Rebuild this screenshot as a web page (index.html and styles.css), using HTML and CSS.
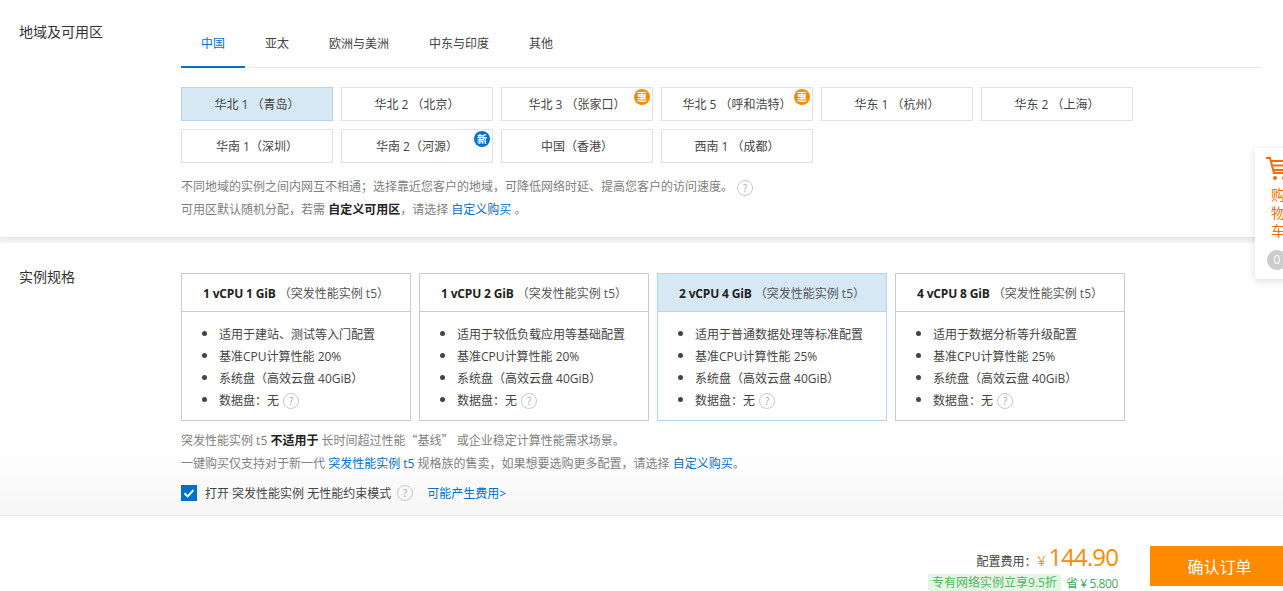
FILE: index.html
```html
<!DOCTYPE html>
<html lang="zh-CN">
<head>
<meta charset="utf-8">
<title>确认订单</title>
<link rel="stylesheet" href="styles.css">
</head>
<body>
<div class="page">
  <section class="region-section">
    <h3 class="label">地域及可用区</h3>
    <div class="content">
      <ul class="tabs">
        <li class="tab active">中国</li>
        <li class="tab">亚太</li>
        <li class="tab">欧洲与美洲</li>
        <li class="tab">中东与印度</li>
        <li class="tab">其他</li>
      </ul>
      <div class="regions">
        <div class="region selected">华北 1 （青岛）</div>
        <div class="region">华北 2 （北京）</div>
        <div class="region">华北 3 （张家口）<span class="badge orange">惠</span></div>
        <div class="region">华北 5 （呼和浩特）<span class="badge orange">惠</span></div>
        <div class="region">华东 1 （杭州）</div>
        <div class="region">华东 2 （上海）</div>
        <div class="region">华南 1（深圳）</div>
        <div class="region">华南 2（河源）<span class="badge blue">新</span></div>
        <div class="region">中国（香港）</div>
        <div class="region">西南 1 （成都）</div>
      </div>
      <p class="note first">不同地域的实例之间内网互不相通；选择靠近您客户的地域，可降低网络时延、提高您客户的访问速度。 <span class="help">?</span></p>
      <p class="note">可用区默认随机分配，若需 <b>自定义可用区</b>，请选择 <a>自定义购买</a> 。</p>
    </div>
  </section>

  <section class="spec-section">
    <h3 class="label">实例规格</h3>
    <div class="content">
      <div class="cards">
        <article class="card">
          <header class="card-head"><b>1 vCPU 1 GiB</b><span>（突发性能实例 t5）</span></header>
          <ul class="card-list">
            <li>适用于建站、测试等入门配置</li>
            <li>基准CPU计算性能 20%</li>
            <li>系统盘（高效云盘 40GiB）</li>
            <li>数据盘：无 <span class="help">?</span></li>
          </ul>
        </article>
        <article class="card">
          <header class="card-head"><b>1 vCPU 2 GiB</b><span>（突发性能实例 t5）</span></header>
          <ul class="card-list">
            <li>适用于较低负载应用等基础配置</li>
            <li>基准CPU计算性能 20%</li>
            <li>系统盘（高效云盘 40GiB）</li>
            <li>数据盘：无 <span class="help">?</span></li>
          </ul>
        </article>
        <article class="card selected">
          <header class="card-head"><b>2 vCPU 4 GiB</b><span>（突发性能实例 t5）</span></header>
          <ul class="card-list">
            <li>适用于普通数据处理等标准配置</li>
            <li>基准CPU计算性能 25%</li>
            <li>系统盘（高效云盘 40GiB）</li>
            <li>数据盘：无 <span class="help">?</span></li>
          </ul>
        </article>
        <article class="card">
          <header class="card-head"><b>4 vCPU 8 GiB</b><span>（突发性能实例 t5）</span></header>
          <ul class="card-list">
            <li>适用于数据分析等升级配置</li>
            <li>基准CPU计算性能 25%</li>
            <li>系统盘（高效云盘 40GiB）</li>
            <li>数据盘：无 <span class="help">?</span></li>
          </ul>
        </article>
      </div>
      <p class="note spec-first">突发性能实例 t5 <b>不适用于</b> 长时间超过性能<span class="cjk">“基线”</span> 或企业稳定计算性能需求场景。</p>
      <p class="note">一键购买仅支持对于新一代 <a>突发性能实例 t5</a> 规格族的售卖，如果想要选购更多配置，请选择 <a>自定义购买</a>。</p>
      <div class="unlimited">
        <span class="checkbox"><svg viewBox="0 0 16 16" width="16" height="16"><path d="M3.500 8.200 6.700 11.400 12.500 5" fill="none" stroke="#fff" stroke-width="2"/></svg></span>
        <span class="unlimited-text">打开 突发性能实例 无性能约束模式</span>
        <span class="help">?</span>
        <a class="fee">可能产生费用&gt;</a>
      </div>
    </div>
  </section>

  <footer class="footer">
    <div class="price-box">
      <div class="price-row"><span class="price-label">配置费用：</span><span class="yen">¥</span><span class="price">144.90</span></div>
      <div class="save-row"><span class="promo">专有网络实例立享9.5折</span><span class="save">省 ¥ 5.800</span></div>
    </div>
    <button class="confirm">确认订单</button>
  </footer>

  <aside class="cart">
    <svg class="cart-icon" viewBox="0 0 24 26" width="24" height="26"><path d="M1 2h4l4 15h12M6 5h16l-1.500 9H8.500M7.500 9.500h14" fill="none" stroke="#ff6a00" stroke-width="2"/><circle cx="10" cy="22" r="2" fill="#ff6a00"/><circle cx="19" cy="22" r="2" fill="#ff6a00"/></svg>
    <div class="cart-text">购物车</div>
    <div class="cart-count">0</div>
  </aside>
</div>
</body>
</html>
```
FILE: styles.css
```css
* { box-sizing: border-box; }
html, body { margin: 0; padding: 0; height: 100%; overflow: hidden; background: #fff; }
body {
  font-family: "Open Sans", "Noto Sans CJK SC", sans-serif;
  font-size: 12px;
  color: #333;
}
a { color: #0070cc; }
b { color: #222; font-weight: 700; }
.cjk { font-family: "Noto Sans CJK SC", sans-serif; line-height: 1; }
.page { position: relative; width: 1283px; height: 591px; overflow: hidden; background: #f5f5f5; }

.region-section {
  display: flex;
  height: 237px;
  background: #fff;
  box-shadow: 0 1px 6px rgba(0, 0, 0, .1);
  position: relative;
}
.label {
  margin: 0;
  width: 181px;
  flex: none;
  padding: 23px 0 0 19px;
  font-size: 14px;
  font-weight: 400;
  line-height: 18px;
  color: #333;
}
.spec-section .label { padding-top: 25px; }
.content { flex: 1; min-width: 0; }

.tabs {
  list-style: none;
  margin: 0 23px 0 0;
  padding: 0;
  height: 68px;
  display: flex;
  border-bottom: 1px solid #e6e6e6;
}
.tab {
  padding: 0 20px;
  height: 68px;
  line-height: 87px;
  color: #444;
  white-space: nowrap;
}
.tab.active { color: #0070cc; border-bottom: 2px solid #0070cc; }

.regions {
  display: grid;
  grid-template-columns: repeat(6, 152px);
  grid-auto-rows: 34px;
  gap: 8px;
  margin-top: 19px;
}
.region {
  position: relative;
  border: 1px solid #e1e1e1;
  text-align: center;
  line-height: 33px;
  color: #444;
  white-space: nowrap;
}
.region.selected { background: #d7e8f5; border-color: #b5d3ec; }
.badge {
  position: absolute;
  top: 1px;
  right: 2px;
  width: 16px;
  height: 16px;
  border-radius: 50%;
  color: #fff;
  font-size: 10px;
  line-height: 16px;
  font-weight: 700;
  text-align: center;
}
.badge.orange { background: #ff8a00; }
.badge.blue { background: #0070cc; }

.note {
  margin: 0;
  height: 23px;
  line-height: 23px;
  color: #808080;
  white-space: nowrap;
}
.note.first { margin-top: 12px; }
.note.spec-first { margin-top: 8px; }
.help {
  display: inline-block;
  width: 16px;
  height: 16px;
  border: 1px solid #c9c9c9;
  border-radius: 50%;
  color: #aaa;
  font-size: 10px;
  line-height: 14px;
  text-align: center;
  vertical-align: middle;
  margin-left: 1px;
}

.spec-section {
  position: absolute;
  top: 243px;
  left: 0;
  right: 0;
  height: 272px;
  display: flex;
  background: linear-gradient(#fff 76%, #f6f6f6 100%);
}
.cards { display: flex; gap: 8px; margin-top: 30px; }
.card {
  width: 230px;
  height: 148px;
  border: 1px solid #cbcbcb;
  background: #fff;
}
.card.selected { border-color: #b5d3ec; }
.card-head {
  height: 38px;
  line-height: 40px;
  text-align: center;
  white-space: nowrap;
  border-bottom: 1px solid #cbcbcb;
  color: #555;
}
.card-head b { letter-spacing: -.15px; }
.card-head span { margin-left: 3px; }
.card.selected .card-head { background: #d7e8f5; border-bottom-color: #b5d3ec; }
.card-list { margin: 0; padding: 11px 0 0 37px; }
.card-list li { height: 22px; line-height: 22px; color: #444; white-space: nowrap; }
.card-list li::marker { font-size: 14px; }
.card-list .help { margin-bottom: 2px; }

.unlimited { display: flex; align-items: center; margin-top: 7px; height: 22px; white-space: nowrap; }
.checkbox {
  width: 16px;
  height: 16px;
  background: #0070cc;
  display: block;
  line-height: 0;
  margin-right: 8px;
}
.unlimited-text { color: #444; }
.unlimited .help { margin-left: 6px; }
.fee { margin-left: 14px; }

.footer {
  position: absolute;
  top: 515px;
  left: 0;
  right: 0;
  height: 76px;
  background: #fff;
  border-top: 1px solid #e6e6e6;
  display: flex;
  justify-content: flex-end;
  align-items: flex-start;
}
.price-box { margin: 26px 32px 0 0; text-align: right; }
.price-row { height: 30px; line-height: 30px; white-space: nowrap; }
.price-label { color: #444; margin-right: 1px; }
.yen { color: #ff8a00; font-size: 14px; margin: 0 3px 0 0; }
.price { color: #ff8a00; font-size: 24px; letter-spacing: -.9px; }
.save-row { margin-top: 2px; display: flex; align-items: center; justify-content: flex-end; white-space: nowrap; }
.promo {
  background: #e2f6e2;
  color: #54b464;
  height: 18px;
  line-height: 18px;
  padding: 0 4px;
  margin-right: 5px;
}
.save { color: #3cae5a; letter-spacing: -.4px; }
.confirm {
  width: 133px;
  height: 40px;
  margin-top: 30px;
  border: 0;
  padding: 1px 0 0 6px;
  background: #ff8a00;
  color: #fff;
  font-family: inherit;
  font-size: 16px;
  line-height: 40px;
}

.cart {
  position: absolute;
  top: 148px;
  left: 1255px;
  width: 50px;
  height: 131px;
  background: #fff;
  box-shadow: 0 2px 8px rgba(0, 0, 0, .14);
}
.cart-icon { display: block; margin: 8px 0 0 10px; }
.cart-text {
  width: 14px;
  margin: 4px 0 0 16px;
  color: #ff6a00;
  font-size: 14px;
  line-height: 18px;
}
.cart-count {
  width: 20px;
  height: 20px;
  margin: 10px 0 0 12px;
  border-radius: 50%;
  background: #ccc;
  color: #fff;
  font-size: 12px;
  line-height: 20px;
  text-align: center;
}
```
